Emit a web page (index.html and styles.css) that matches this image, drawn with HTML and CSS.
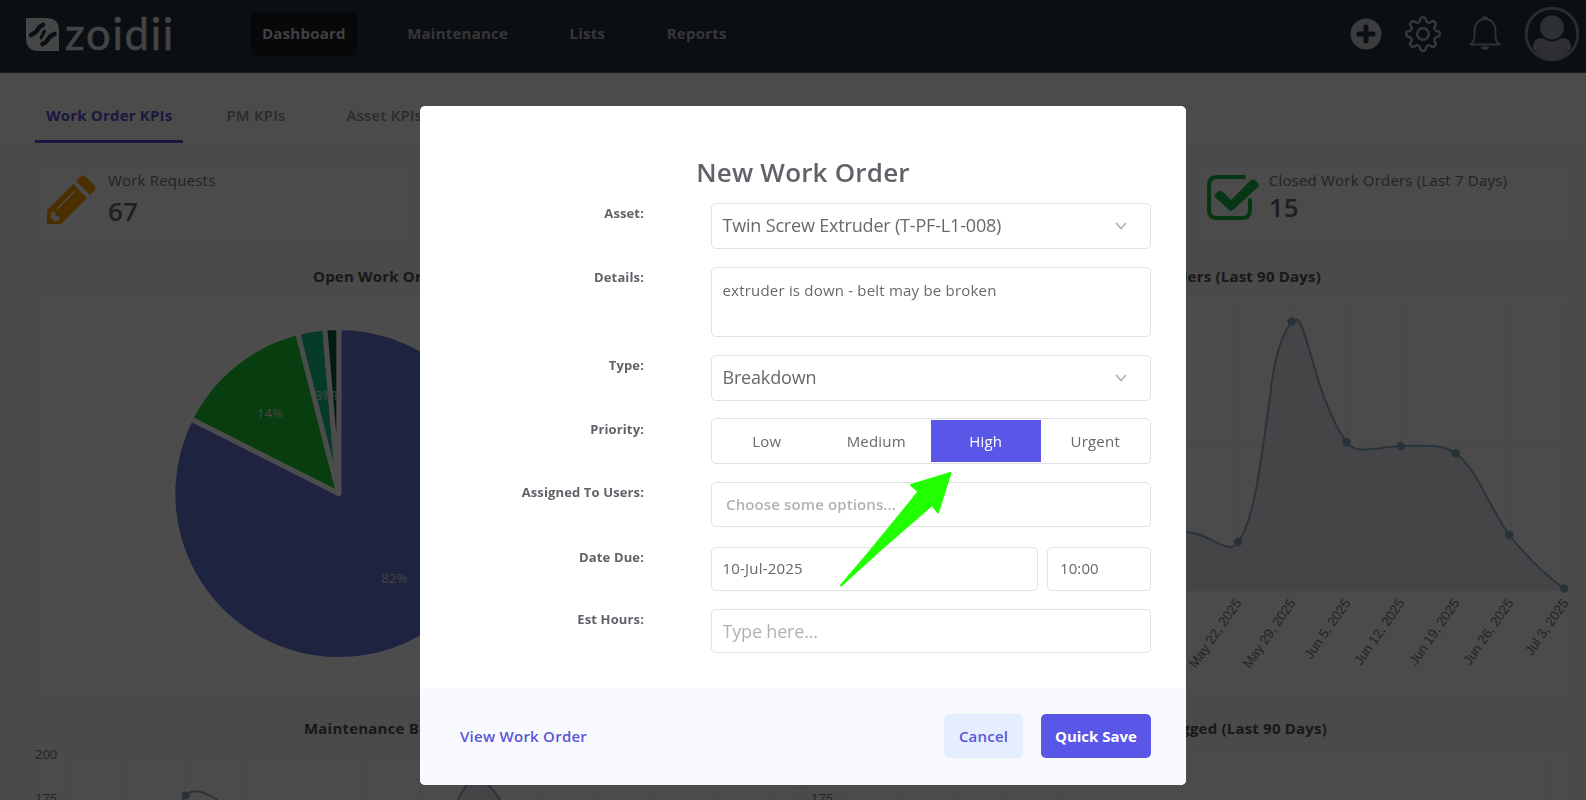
FILE: index.html
```html
<!DOCTYPE html>
<html lang="en">
<head>
    <meta charset="UTF-8">
    <meta name="viewport" content="width=device-width, initial-scale=1.0">
    <title>Zoidii - Dashboard</title>
    <link rel="stylesheet" href="styles.css">
</head>
<body>
    <header class="navbar">
        <svg class="logo" width="150" height="56" viewBox="0 -7 150 56">
            <path d="M0 5h20q13 0 13 13v20H13Q0 38 0 25z" fill="#e8ecec"/>
            <g stroke="#26303d" stroke-width="4.6" stroke-linecap="round" stroke-linejoin="round" fill="none">
                <path d="M5 22l4.500-2.500 4-5.500 3.500-2"/>
                <path d="M16.500 31l3.500-2 4-5.500 4.500-2.500"/>
                <path d="M15 25l3.500-7" stroke-width="3"/>
            </g>
            <text x="39" y="37" textLength="108.500" lengthAdjust="spacing">zoidii</text>
        </svg>
        <nav class="menu">
            <a class="menu-item active">Dashboard</a>
            <a class="menu-item">Maintenance</a>
            <a class="menu-item">Lists</a>
            <a class="menu-item">Reports</a>
        </nav>
        <div class="nav-icons">
            <svg class="icon-add" width="32" height="32" viewBox="0 0 32 32">
                <circle cx="16" cy="16" r="15.500" fill="#c4c8cb"/>
                <path d="M16 9v14M9 16h14" stroke="#26303d" stroke-width="5" stroke-linecap="round"/>
            </svg>
            <svg class="icon-gear" width="38" height="38" viewBox="0 0 38 38" fill="none" stroke="#b4b8bc" stroke-width="2.400" stroke-linejoin="round">
                <path id="gear"/>
                <circle cx="19" cy="19" r="5.800"/>
            </svg>
            <svg class="icon-bell" width="34" height="36" viewBox="0 0 34 36" fill="none" stroke="#a4a8ac" stroke-width="1.800">
                <path d="M2 28.500h30c-3-1.500-4.500-5-4.500-9v-5C27.500 7.500 23 3 17 3S6.500 7.500 6.500 14.500v5c0 4-1.500 7.500-4.500 9z"/>
                <path d="M15 2.500q2-2 4 0" stroke-width="2.500"/>
                <path d="M12.500 30.500h9q-1 3.500-4.500 3.500t-4.500-3.500z" fill="#a4a8ac" stroke="none"/>
            </svg>
            <svg class="icon-user" width="56" height="56" viewBox="0 0 56 56">
                <circle cx="28" cy="28" r="25.800" fill="none" stroke="#8b9098" stroke-width="3"/>
                <circle cx="28" cy="21.500" r="12" fill="#9a9fa8"/>
                <path d="M9 42q0-10 8-10 3 0 5 2 6 3 12 0 2-2 5-2 8 0 8 10-8 12.500-19 12.500T9 42z" fill="#9a9fa8"/>
            </svg>
        </div>
    </header>

    <div class="tabs">
        <a class="tab active">Work Order KPIs</a>
        <a class="tab">PM KPIs</a>
        <a class="tab asset">Asset KPIs</a>
    </div>

    <main class="dashboard">
        <section class="stats">
            <div class="stat">
                <svg class="stat-icon" width="50" height="50" viewBox="0 0 50 50">
                    <path d="M1 49V35L27 9l14 14-26 26z" fill="#ff9f00"/>
                    <path d="M30 6l4-4q3-3 6 0l8 8q3 3 0 6l-4 4z" fill="#ff9f00"/>
                    <path d="M11 34l18-18" stroke="#f8f8f8" stroke-width="1.500"/>
                    <path d="M5 38l3-2 2 5 4 1-1 4-5 0-3-3z" fill="#f8f8f8"/>
                </svg>
                <div>
                    <div class="stat-label">Work Requests</div>
                    <div class="stat-value">67</div>
                </div>
            </div>
            <div class="stat"></div>
            <div class="stat"></div>
            <div class="stat closed">
                <svg class="stat-icon" width="54" height="48" viewBox="0 0 54 48">
                    <path d="M38 3H11Q3 3 3 11v25q0 8 8 8h25q8 0 8-8V26" fill="none" stroke="#12b848" stroke-width="4" stroke-linecap="round"/>
                    <path d="M9 20l4-3q2-1 4 1l8 8L45 6q2-1 4 0l3 3q2 2 0 4L27 36q-2 2-4 0L9 23q-1-2 0-3z" fill="#12b848"/>
                </svg>
                <div>
                    <div class="stat-label">Closed Work Orders (Last 7 Days)</div>
                    <div class="stat-value">15</div>
                </div>
            </div>
        </section>

        <section class="charts">
            <div class="chart-box">
                <h2 class="from-left">Open Work Orders By Type</h2>
                <div class="panel tall">
                    <svg width="760" height="404" viewBox="36 293 760 404">
                        <g stroke="#fff" stroke-width="5" stroke-linejoin="round">
                            <path d="M338.800 493.500V327.500A166 166 0 1 1 190.600 418.800z" fill="#6775d5"/>
                            <path d="M338.800 493.500L190.600 418.800A166 166 0 0 1 297.700 332.700z" fill="#1cd032"/>
                            <path d="M338.800 493.500L297.700 332.700A166 166 0 0 1 324.800 328.100z" fill="#11c582"/>
                            <path d="M338.800 493.500L324.800 328.100A166 166 0 0 1 338.800 327.500z" fill="#0d5735"/>
                        </g>
                        <g class="pie-text">
                            <text x="270" y="417.500">14%</text>
                            <text x="324" y="399.500">3%</text>
                            <text x="333.500" y="399.500">1%</text>
                            <text x="394.500" y="583">82%</text>
                        </g>
                    </svg>
                </div>
            </div>
            <div class="chart-box">
                <h2 class="from-right">Closed Work Orders (Last 90 Days)</h2>
                <div class="panel tall">
                    <svg width="760" height="404" viewBox="810 293 760 404">
                        <path class="grid" d="M1238.500 300v294M1292.500 300v294M1347 300v294M1401 300v294M1456 300v294M1510.500 300v294M1565 300v294M1180 446.500h387M1180 590.500h387"/>
                        <path class="area" d="M1186 532C1204 532 1218 547 1230 547Q1235 547 1238 542C1256 518 1262 450 1270 397C1274 360 1280 338 1291.700 321.300C1296 319 1298 318 1301 325C1312 350 1320 405 1346.700 442.300C1352 449 1358 450 1367 449.500C1380 449 1388 446.500 1400.700 446C1422 446 1442 443 1455.700 453.300C1478 470 1490 509 1509.300 535C1526 556 1545 575 1564.300 588.500V590.500H1186z"/>
                        <path class="line" d="M1186 532C1204 532 1218 547 1230 547Q1235 547 1238 542C1256 518 1262 450 1270 397C1274 360 1280 338 1291.700 321.300C1296 319 1298 318 1301 325C1312 350 1320 405 1346.700 442.300C1352 449 1358 450 1367 449.500C1380 449 1388 446.500 1400.700 446C1422 446 1442 443 1455.700 453.300C1478 470 1490 509 1509.300 535C1526 556 1545 575 1564.300 588.500"/>
                        <g class="dots">
                            <circle cx="1238" cy="542" r="4.200"/>
                            <circle cx="1291.700" cy="321.500" r="4.200"/>
                            <circle cx="1346.700" cy="442.300" r="4.200"/>
                            <circle cx="1400.700" cy="446" r="4.200"/>
                            <circle cx="1455.700" cy="453.300" r="4.200"/>
                            <circle cx="1509.300" cy="535" r="4.200"/>
                            <circle cx="1564.300" cy="588.500" r="4.200"/>
                        </g>
                        <g class="dates">
                            <text transform="translate(1242 603) rotate(-55)">May 22, 2025</text>
                            <text transform="translate(1296 603) rotate(-55)">May 29, 2025</text>
                            <text transform="translate(1351 603) rotate(-55)">Jun 5, 2025</text>
                            <text transform="translate(1405 603) rotate(-55)">Jun 12, 2025</text>
                            <text transform="translate(1460 603) rotate(-55)">Jun 19, 2025</text>
                            <text transform="translate(1514 603) rotate(-55)">Jun 26, 2025</text>
                            <text transform="translate(1569 603) rotate(-55)">Jul 3, 2025</text>
                        </g>
                    </svg>
                </div>
            </div>
            <div class="chart-box">
                <h2 class="from-left backlog">Maintenance Backlog</h2>
                <div class="panel">
                    <svg width="760" height="55" viewBox="36 745 760 55">
                        <path class="grid" d="M68.500 752v48M127.500 752v48M186 752v48M245 752v48M304 752v48M362.500 752v48M421 752v48M480 752v48M537 752v48M596.500 752v48M655 752v48M713.500 752v48M774 752v48M64 756.500h710"/>
                        <path class="area" d="M458 800Q475 760 500 800z"/>
                        <path class="line" d="M182 800L185.500 795.500Q194 785 218 800M458 800Q475 760 500 800"/>
                        <g class="dots"><circle cx="185.500" cy="795.500" r="4"/></g>
                        <g class="axis">
                            <text x="35" y="759">200</text>
                            <text x="35" y="803">175</text>
                        </g>
                    </svg>
                </div>
            </div>
            <div class="chart-box">
                <h2 class="from-right logged">Hours Logged (Last 90 Days)</h2>
                <div class="panel">
                    <svg width="760" height="55" viewBox="810 745 760 55">
                        <path class="grid" d="M842.500 755v45M897.500 755v45M952.500 755v45M1006 755v45M1061 755v45M1496 755v45M1551.500 755v45"/>
                        <g class="axis"><text x="811" y="803">175</text></g>
                    </svg>
                </div>
            </div>
        </section>
    </main>

    <div class="overlay">
        <form class="modal">
            <div class="modal-body">
                <h1>New Work Order</h1>
                <div class="row">
                    <label>Asset:</label>
                    <div class="field select">Twin Screw Extruder (T-PF-L1-008)
                        <svg width="12" height="8" viewBox="0 0 12 8"><path d="M1 1l5 5.500L11 1"/></svg>
                    </div>
                </div>
                <div class="row">
                    <label>Details:</label>
                    <textarea class="field details">extruder is down - belt may be broken</textarea>
                </div>
                <div class="row">
                    <label>Type:</label>
                    <div class="field select">Breakdown
                        <svg width="12" height="8" viewBox="0 0 12 8"><path d="M1 1l5 5.500L11 1"/></svg>
                    </div>
                </div>
                <div class="row">
                    <label>Priority:</label>
                    <div class="field priority">
                        <span>Low</span>
                        <span>Medium</span>
                        <span class="selected">High</span>
                        <span>Urgent</span>
                    </div>
                </div>
                <div class="row users">
                    <label>Assigned To Users:</label>
                    <input class="field" type="text" placeholder="Choose some options...">
                </div>
                <div class="row date">
                    <label>Date Due:</label>
                    <input class="field" type="text" value="10-Jul-2025">
                    <input class="field time" type="text" value="10:00">
                </div>
                <div class="row hours">
                    <label>Est Hours:</label>
                    <input class="field" type="text" placeholder="Type here...">
                </div>
            </div>
            <div class="modal-footer">
                <a class="view-link">View Work Order</a>
                <button type="button" class="btn cancel">Cancel</button>
                <button type="button" class="btn save">Quick Save</button>
            </div>
        </form>
        <svg class="arrow" width="116" height="118" viewBox="838 470 116 118">
            <path d="M950.500 473L911 485l7.500 6.500Q880 540 841 585.500Q885 545 932 505l6 7.500z" fill="#22ff00" stroke="#22ff00" stroke-width="2" stroke-linejoin="round"/>
        </svg>
    </div>

    <script>
        // eight-tooth gear outline
        const points = [];
        for (let i = 0; i <= 144; i++) {
            const a = i / 144 * Math.PI * 2;
            const wave = Math.tanh(2.2 * Math.cos(a * 8));
            const r = 14.7 + 2.1 * wave;
            points.push((19 + r * Math.sin(a)).toFixed(2) + ' ' + (19 - r * Math.cos(a)).toFixed(2));
        }
        document.getElementById('gear').setAttribute('d', 'M' + points.join('L') + 'z');
    </script>
</body>
</html>
```
FILE: styles.css
```css
* {
    box-sizing: border-box;
}
body {
    margin: 0;
    height: 800px;
    overflow: hidden;
    font-family: 'Open Sans', sans-serif;
    font-size: 15px;
    letter-spacing: 0.2px;
    color: #5f6368;
    background: #f8f8f8;
}
.navbar {
    height: 73px;
    display: flex;
    align-items: center;
    padding: 0 6px 4px 26px;
    background: #26303d;
    border-bottom: 1px solid #5a5f66;
}
.logo text {
    font-family: 'Lato', sans-serif;
    font-size: 43.5px;
    fill: #e0e4e4;
    stroke: #e0e4e4;
    stroke-width: 0.5;
}
.menu {
    display: flex;
    gap: 39.4px;
    margin-left: 75px;
}
.menu-item {
    height: 44px;
    line-height: 43px;
    padding: 0 11px;
    border-radius: 6px;
    font-weight: 700;
    letter-spacing: 0.24px;
    color: #b4b8bc;
}
.menu-item.active {
    background: #151b22;
    color: #d4d8dc;
}
.nav-icons {
    display: flex;
    align-items: center;
    margin-left: auto;
}
.icon-gear {
    margin-left: 22px;
}
.icon-bell {
    margin-left: 26px;
}
.icon-user {
    margin-left: 22px;
}
.tabs {
    height: 71px;
    display: flex;
    gap: 32px;
    padding-left: 35px;
    background: #fafafa;
}
.tab {
    height: 70px;
    padding: 0 11px;
    line-height: 84px;
    font-weight: 600;
    color: #8e9196;
}
.tab.active {
    color: #5a50d8;
    font-weight: 700;
    border-bottom: 3px solid #5a50d8;
}
.tab.asset {
    margin-left: 7px;
}
.dashboard {
    padding: 19px 15px 0 35px;
}
.stats {
    display: grid;
    grid-template-columns: repeat(4, 1fr);
    gap: 13px;
}
.stat {
    height: 81px;
    display: flex;
    padding: 6px 10px;
    background: #fafafa;
    border: 1px solid #f5f5f5;
}
.stat-icon {
    margin: 5px 12px 0 0;
}
.closed {
    padding-left: 9px;
}
.closed .stat-icon {
    margin: 4px 9px 0 -1px;
}
.stat-label {
    line-height: 21px;
    color: #75777a;
}
.stat-value {
    font-size: 26px;
    line-height: 40px;
    font-weight: 600;
    color: #66686c;
}
.closed .stat-value {
    line-height: 33px;
}
.charts {
    display: grid;
    grid-template-columns: 1fr 1fr;
    column-gap: 12px;
}
.chart-box h2 {
    margin: 0;
    height: 48px;
    padding-top: 22px;
    font-size: 15px;
    line-height: 20px;
    font-weight: 700;
    color: #505256;
}
.from-left {
    padding-left: 278px;
}
.from-left.backlog {
    padding-left: 269px;
}
.from-right {
    padding-right: 250px;
    text-align: right;
}
.from-right.logged {
    padding-right: 244px;
}
.chart-box .backlog, .chart-box .logged {
    height: 46px;
    padding-top: 20px;
}
.panel {
    border: 1px solid #f2f2f2;
    border-radius: 4px;
    background: #fafafa;
}
.panel svg {
    display: block;
}
.tall {
    height: 406px;
}
.pie-text {
    font-size: 13px;
    text-anchor: middle;
    fill: #e2e4e6;
}
.grid {
    fill: none;
    stroke: #efefef;
}
.area {
    fill: rgba(150, 160, 185, 0.2);
}
.line {
    fill: none;
    stroke: #86b0bf;
    stroke-width: 2;
}
.dots {
    fill: #86a9b8;
}
.dates {
    font-family: 'Liberation Sans', sans-serif;
    font-size: 13.5px;
    letter-spacing: -0.1px;
    text-anchor: end;
    fill: #77797c;
}
.axis {
    font-size: 13px;
    letter-spacing: 0;
    fill: #77797c;
}

/* new work order modal */
.overlay {
    position: fixed;
    inset: 0;
    padding: 105.5px 0 0 420px;
    background: rgba(0, 0, 0, 0.7);
}
.modal {
    width: 766px;
    height: 679px;
    display: flex;
    flex-direction: column;
    border-radius: 5px;
    overflow: hidden;
    background: #fff;
}
.modal-body {
    flex: 1;
    padding: 47px 35px 0 0;
}
.modal h1 {
    margin: 0;
    height: 50px;
    font-size: 26px;
    line-height: 38px;
    font-weight: 600;
    text-align: center;
    padding-left: 35px;
    color: #5f6368;
}
.row {
    display: flex;
    margin-bottom: 18px;
}
.row label {
    width: 224px;
    margin-right: 67px;
    flex: none;
    font-size: 13px;
    line-height: 20.5px;
    letter-spacing: 0.13px;
    font-weight: 700;
    text-align: right;
    color: #5f6368;
}
.field {
    flex: 1;
    min-width: 0;
    height: 46px;
    padding: 0 10.5px;
    border: 1px solid #dfe1e4;
    border-radius: 5px;
    background: #fff;
    font-family: inherit;
    font-size: 15px;
    letter-spacing: 0.2px;
    color: #66696d;
    outline: none;
}
.select {
    display: flex;
    align-items: center;
    justify-content: space-between;
    padding-right: 23px;
    padding-bottom: 1px;
    font-size: 18px;
    letter-spacing: -0.18px;
}
.select svg {
    margin-top: 2px;
    fill: none;
    stroke: #a9b4c4;
    stroke-width: 1.8;
}
.details {
    height: 70px;
    padding-top: 12px;
    resize: none;
}
.priority {
    display: flex;
    padding: 1px 0 1px;
}
.row .priority {
    margin-top: -0.5px;
}
.priority span {
    flex: 1;
    line-height: 42px;
    text-align: center;
}
.priority .selected {
    background: #5956e8;
    color: #fff;
}
.field::placeholder {
    color: #b0b2b5;
}
.users {
    margin-bottom: 20.5px;
}
.users .field {
    height: 45px;
    margin-top: -0.5px;
    padding: 0 14px 1px;
}
.users .field::placeholder {
    font-weight: 600;
    letter-spacing: 0.12px;
}
.date {
    margin-bottom: 18px;
}
.date .field, .hours .field {
    height: 44px;
}
.date .field {
    margin-top: -0.5px;
    padding-bottom: 1px;
}
.date .time {
    flex: none;
    width: 104px;
    margin-left: 9px;
    padding-left: 12px;
    letter-spacing: 0.1px;
}
.hours .field {
    font-size: 18px;
    letter-spacing: -0.18px;
}
.modal-footer {
    height: 97px;
    display: flex;
    align-items: center;
    padding: 0 35px 0 40px;
    background: #f9fafd;
}
.view-link {
    margin-right: auto;
    font-weight: 600;
    letter-spacing: 0.25px;
    color: #5956d8;
}
.btn {
    height: 44px;
    padding: 0 0 1px;
    border: none;
    border-radius: 5px;
    font-family: inherit;
    font-size: 15px;
    font-weight: 600;
    letter-spacing: 0.2px;
}
.cancel {
    width: 79px;
    background: #e5edfe;
    color: #5956d8;
}
.save {
    width: 110px;
    margin-left: 18px;
    background: #5956e8;
    color: #fff;
    font-weight: 700;
    letter-spacing: 0;
}
.arrow {
    position: absolute;
    left: 838px;
    top: 470px;
}
```
